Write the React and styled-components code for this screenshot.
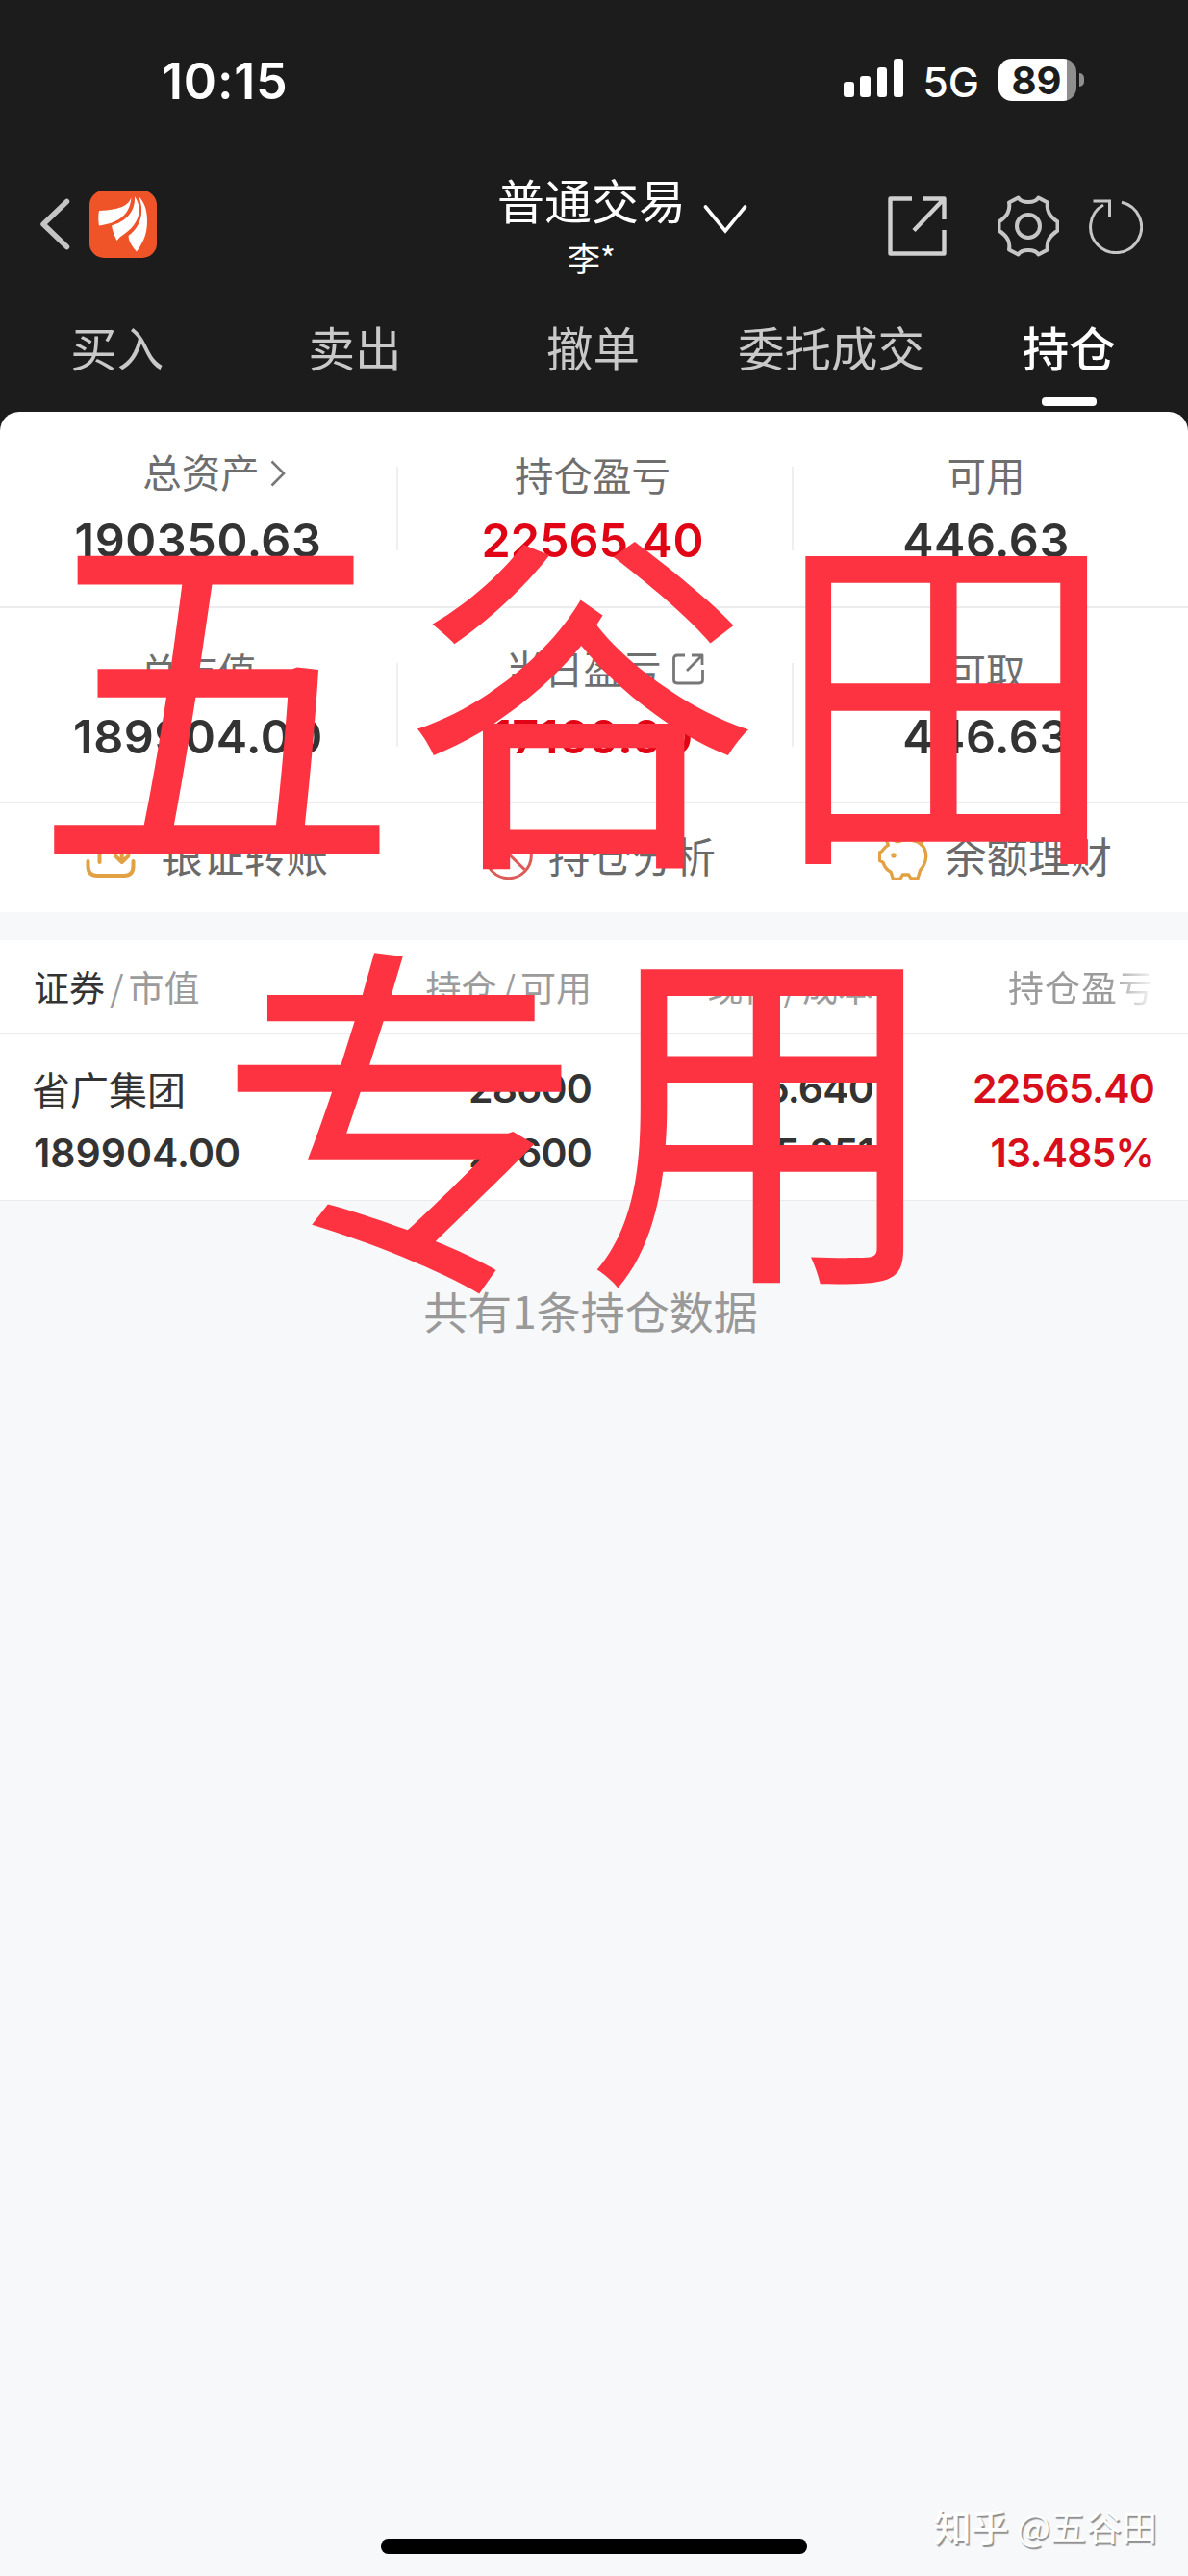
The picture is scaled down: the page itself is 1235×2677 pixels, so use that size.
import React from "react";
import styled, { createGlobalStyle } from "styled-components";

const tabs = ["买入", "卖出", "撤单", "委托成交", "持仓"];

const assets = [
  [
    { label: "总资产", value: "190350.63", icon: "more" },
    { label: "持仓盈亏", value: "22565.40", up: true },
    { label: "可用", value: "446.63" },
  ],
  [
    { label: "总市值", value: "189904.00" },
    { label: "当日盈亏", value: "17160.00", up: true, icon: "share" },
    { label: "可取", value: "446.63" },
  ],
];

const App = () => {
  return (
    <Screen>
      <GlobalStyle />
      <Header>
        <StatusBar>
          <Time>10:15</Time>
          <StatusRight>
            <Signal>
              <SignalBar $h={16} />
              <SignalBar $h={22} />
              <SignalBar $h={31} />
              <SignalBar $h={40} />
            </Signal>
            <Network>5G</Network>
            <Battery>
              <BatteryBody>89</BatteryBody>
              <BatteryTip />
            </Battery>
          </StatusRight>
        </StatusBar>
        <NavBar>
          <NavLeft>
            <BackIcon />
            <LogoIcon />
          </NavLeft>
          <NavTitle>
            <Title>普通交易</Title>
            <UserName>李*</UserName>
          </NavTitle>
          <NavRight>
            <CaretIcon />
            <NavIcons>
              <ShareIcon />
              <GearIcon />
              <RefreshIcon />
            </NavIcons>
          </NavRight>
        </NavBar>
        <Tabs>
          {tabs.map((tab) => (
            <Tab key={tab} $active={tab === "持仓"}>
              {tab}
            </Tab>
          ))}
        </Tabs>
      </Header>

      <PanelShell>
        <Panel>
          {assets.map((row, i) => (
            <AssetRow key={i}>
              {row.map((item, j) => (
                <React.Fragment key={item.label}>
                  {j > 0 && <Divider />}
                  <AssetCell $shift={j * 5}>
                    <AssetLabel $raised={!!item.icon}>
                      {item.label}
                      {item.icon === "more" && <MoreIcon />}
                      {item.icon === "share" && <SmallShareIcon />}
                    </AssetLabel>
                    <AssetValue $up={item.up}>{item.value}</AssetValue>
                  </AssetCell>
                </React.Fragment>
              ))}
            </AssetRow>
          ))}
          <Actions>
            <Action $gap={26}>
              <TransferIcon />
              银证转账
            </Action>
            <Action $gap={15}>
              <PieIcon />
              持仓分析
            </Action>
            <Action $gap={17}>
              <PiggyIcon />
              余额理财
            </Action>
          </Actions>
        </Panel>
      </PanelShell>

      <Holdings>
        <TableHead>
          <HeadCell $left>
            <Dark>证券</Dark>
            <Slash>/</Slash>市值
          </HeadCell>
          <HeadCell>
            持仓<Slash>/</Slash>可用
          </HeadCell>
          <HeadCell>
            现价<Slash>/</Slash>成本
          </HeadCell>
          <HeadCell $fade>持仓盈亏</HeadCell>
        </TableHead>
        <StockRow>
          <StockCell $left>
            <StockName>省广集团</StockName>
            <span>189904.00</span>
          </StockCell>
          <StockCell>
            <span>28600</span>
            <span>28600</span>
          </StockCell>
          <StockCell>
            <span>6.640</span>
            <span>5.851</span>
          </StockCell>
          <StockCell $up>
            <span>22565.40</span>
            <span>13.485%</span>
          </StockCell>
        </StockRow>
      </Holdings>
      <Total>共有1条持仓数据</Total>
      <HomeIndicator />

      <Stamp>
        <StampLine $x={35}>
          <StampChar $sx={1} $sy={1.06} $dy={-6}>五</StampChar>
          <StampChar $sx={0.975} $sy={0.99} $dy={-1}>谷</StampChar>
          <StampChar $sx={0.951} $sy={1} $dx={-2} $dy={-4}>田</StampChar>
        </StampLine>
        <StampLine $x={226} $y={54}>
          <StampChar $sx={1.015} $sy={1.01} $dx={2} $dy={3}>专</StampChar>
          <StampChar $sx={0.98} $sy={1.02} $dx={-1} $dy={-6}>用</StampChar>
        </StampLine>
      </Stamp>
      <Credit>
        <CreditSite>知乎</CreditSite> @五谷田
      </Credit>
    </Screen>
  );
};

export default App;

const BackIcon = () => (
  <svg width="31" height="54" viewBox="0 0 31 54" fill="none" stroke="#c4c4c4" strokeWidth="5.5" strokeLinecap="round" strokeLinejoin="round">
    <path d="M27.5 3.5L3 27L27.5 50.5" />
  </svg>
);

const LogoIcon = () => (
  <svg width="70" height="70" viewBox="0 0 70 70">
    <rect width="70" height="70" rx="15" fill="#ee5428" />
    <g fill="#fff">
      <path d="M43.5 7C41 15 33 20 10 21C9 26 9 31 10 36.5C28 34 42 27 43.5 7Z" />
      <path d="M47 6C48 22 38 32 23 36.5C24 42 26 47 28.5 52C33 46 40 44 46 36C54 25 53 15 47 6Z" />
      <path d="M51 6C58 22 53 38 40.5 47C41 53 44 58 49 63.5C54 56 60 48 60 32C60 20 57 12 51 6Z" />
    </g>
  </svg>
);

const CaretIcon = () => (
  <Caret width="46" height="32" viewBox="0 0 46 32" fill="none" stroke="#fff" strokeWidth="3.6" strokeLinecap="round">
    <path d="M2.5 3L23 28L43.5 3" />
  </Caret>
);

const ShareIcon = () => (
  <svg width="61" height="62" viewBox="0 0 61 62" fill="none" stroke="#cfcfcf" strokeWidth="4.4" strokeLinejoin="round">
    <path d="M25 2.5H2.5V59.5H58.5V35M36.5 2.5H58.5V24M58 3L27 35.5" />
  </svg>
);

const GearIcon = () => (
  <svg width="64" height="64" viewBox="-32 -32 64 64" fill="none" stroke="#c6c6c6" strokeWidth="4" strokeLinejoin="round">
    <path d="M-10.5 -29.5C-7 -23.5 7 -23.5 10.5 -29.5L20 -24.5C18.5 -16 22 -10.5 30.5 -4.5V4.5C22 10.5 18.5 16 20 24.5L10.5 29.5C7 23.5 -7 23.5 -10.5 29.5L-20 24.5C-18.5 16 -22 10.5 -30.5 4.5V-4.5C-22 -10.5 -18.5 -16 -20 -24.5Z" />
    <circle r="12" />
  </svg>
);

const RefreshIcon = () => (
  <svg width="56" height="58" viewBox="-28 -30 56 58" fill="none" stroke="#c6c6c6" strokeWidth="3">
    <path d="M6 -25.8A26.5 26.5 0 1 1 -13 -23M-23.5 -27H-6.5V-10" />
  </svg>
);

const MoreIcon = () => (
  <More width="16" height="28" viewBox="0 0 16 28" fill="none" stroke="#777" strokeWidth="2.6">
    <path d="M1.5 1.5L14 14L1.5 26.5" />
  </More>
);

const SmallShareIcon = () => (
  <SmallShare width="33" height="33" viewBox="0 0 33 33" fill="none" stroke="#777" strokeWidth="2.8" strokeLinejoin="round">
    <path d="M13 2H5Q1.5 2 1.5 5.5V27.5Q1.5 31 5 31H28Q31.5 31 31.5 27.5V17M20 2H31V12M31 2L15 18" />
  </SmallShare>
);

const TransferIcon = () => (
  <svg width="52" height="52" viewBox="0 0 52 52" fill="none" stroke="#e2a243" strokeWidth="4" strokeLinecap="round" strokeLinejoin="round">
    <path d="M2.5 32V37Q2.5 47 12 47H40Q49.5 47 49.5 37V32" />
    <path d="M14.5 33V6M7.8 13L14.5 6M37.7 5V32M31 26.5L37.7 33L44.5 26.5" />
  </svg>
);

const PieIcon = () => (
  <svg width="52" height="52" viewBox="69 15 156 156" fill="none" stroke="#dd5b57" strokeWidth="9">
    <circle cx="146" cy="93" r="71" />
    <path d="M195 44L148 90L196 137" />
  </svg>
);

const PiggyIcon = () => (
  <svg width="52" height="52" viewBox="39 30 156 156" fill="none" stroke="#e2a243" strokeWidth="10" strokeLinecap="round" strokeLinejoin="round">
    <path d="M64 59Q84 56 98 66Q118 58 140 60C175 64 189 88 188 112C187 132 178 145 170 154L162 180H141L134 168H115L108 181H85L78 159Q62 152 54 130L43 124V99Q52 96 56 88Q62 80 70 76Z" />
    <path d="M119 56C124 34 176 30 177 58Q177 68 172 74" />
    <circle cx="87" cy="108" r="3" fill="#e2a243" />
  </svg>
);

const GlobalStyle = createGlobalStyle`
  body {
    margin: 0;
    background: #f7f8fa;
  }
  * {
    box-sizing: border-box;
  }
  svg {
    display: block;
    flex: none;
  }
`;

const Screen = styled.div`
  position: relative;
  width: 1235px;
  height: 2677px;
  display: flex;
  flex-direction: column;
  overflow: hidden;
  background: #f7f8fa;
  font-family: "Noto Sans CJK SC", sans-serif;
`;

const Header = styled.header`
  height: 428px;
  background: #1c1c1c;
  color: #fff;
`;

const StatusBar = styled.div`
  height: 168px;
  padding: 0 108px 0 168px;
  display: flex;
  align-items: center;
  justify-content: space-between;
  font-family: Inter, sans-serif;
`;

const Time = styled.div`
  font-size: 52px;
  font-weight: 580;
  letter-spacing: 0.8px;
`;

const StatusRight = styled.div`
  display: flex;
  align-items: center;
`;

const Signal = styled.div`
  display: flex;
  align-items: flex-end;
  gap: 6.4px;
  height: 40px;
  margin-top: -6px;
`;

const SignalBar = styled.div`
  width: 10.7px;
  height: ${({ $h }) => $h}px;
  border-radius: 3px;
  background: #fff;
`;

const Network = styled.div`
  margin: 2px 20px 0 20px;
  font-size: 43px;
  font-weight: 500;
`;

const Battery = styled.div`
  display: flex;
  align-items: center;
  gap: 3px;
  margin-top: -2px;
`;

const BatteryBody = styled.div`
  width: 81px;
  height: 44px;
  padding-right: 2px;
  display: flex;
  align-items: center;
  justify-content: center;
  border-radius: 14px;
  background: linear-gradient(to right, #fff 71px, #8e8e8e 71px);
  color: #1c1c1c;
  font-size: 40px;
  font-weight: 680;
`;

const BatteryTip = styled.div`
  width: 5px;
  height: 14px;
  border-radius: 0 5px 5px 0;
  background: #8e8e8e;
`;

const NavBar = styled.div`
  height: 136px;
  padding: 0 47px 0 42px;
  display: grid;
  grid-template-columns: 475px 196px 1fr;
  align-items: center;
`;

const NavLeft = styled.div`
  display: flex;
  align-items: center;
  gap: 20px;
  padding-bottom: 6px;
`;

const NavTitle = styled.div`
  display: flex;
  flex-direction: column;
  align-items: center;
  padding-bottom: 5px;
`;

const Title = styled.div`
  font-size: 49px;
  line-height: 60px;
  white-space: nowrap;
`;

const UserName = styled.div`
  margin-top: 9px;
  font-size: 34px;
  line-height: 44px;
`;

const NavRight = styled.div`
  display: flex;
  align-items: center;
  justify-content: space-between;
  padding: 0 0 2px 18px;
`;

const Caret = styled.svg`
  margin-bottom: 14px;
`;

const NavIcons = styled.div`
  display: flex;
  align-items: center;
  gap: 53px;

  svg:last-child {
    margin-left: -22px;
  }
`;

const Tabs = styled.nav`
  display: grid;
  grid-template-columns: repeat(5, 1fr);
  padding-top: 20px;
  margin-left: -2px;
`;

const Tab = styled.div`
  display: flex;
  flex-direction: column;
  align-items: center;
  font-size: 48.5px;
  line-height: 72px;
  font-weight: ${({ $active }) => ($active ? 500 : 400)};
  color: ${({ $active }) => ($active ? "#fff" : "#c9c9c9")};

  &::after {
    content: "";
    width: 57px;
    height: 9px;
    margin-top: 17px;
    border-radius: 4px;
    background: ${({ $active }) => ($active ? "#fff" : "transparent")};
  }
`;

const PanelShell = styled.div`
  background: #1c1c1c;
`;

const Panel = styled.section`
  height: 520px;
  border-radius: 20px 20px 0 0;
  background: #fff;
`;

const AssetRow = styled.div`
  display: grid;
  grid-template-columns: 412px 2px 409px 2px 1fr;
  height: 204px;
  border-bottom: 2px solid #ececee;

  & + & {
    height: 202px;
    border-bottom-width: 1px;
  }
`;

const Divider = styled.div`
  height: 87px;
  margin-top: 57px;
  background: #efefef;
`;

const AssetCell = styled.div`
  padding: 35px ${({ $shift }) => $shift}px 0 0;
  display: flex;
  flex-direction: column;
  align-items: center;
`;

const AssetLabel = styled.div`
  display: flex;
  align-items: center;
  margin-top: ${({ $raised }) => ($raised ? -3 : 0)}px;
  margin-bottom: ${({ $raised }) => ($raised ? 14 : 11)}px;
  color: #6e6e6e;
  font-size: 40.5px;
  line-height: 60px;
`;

const More = styled.svg`
  margin: 4px -33px 0 11px;
`;

const SmallShare = styled.svg`
  margin: 2px -25px 0 11px;
`;

const AssetValue = styled.div`
  color: ${({ $up }) => ($up ? "#e00414" : "#333")};
  font-family: Inter, sans-serif;
  font-size: 48.5px;
  font-weight: 570;
  line-height: 56px;
  letter-spacing: ${({ $up }) => ($up ? 0 : 0.6)}px;
`;

const Actions = styled.div`
  height: 110px;
  padding-left: 89px;
  display: grid;
  grid-template-columns: 414px 410px 1fr;
  align-items: center;
`;

const Action = styled.div`
  display: flex;
  align-items: center;
  gap: ${({ $gap }) => $gap}px;
  color: #6a6a6a;
  font-size: 43.5px;
  line-height: 60px;
`;

const Holdings = styled.section`
  margin-top: 29px;
  background: #fff;
  border-bottom: 1px solid #ebebed;
`;

const TableHead = styled.div`
  height: 98px;
  padding: 0 35px 1px;
  display: grid;
  grid-template-columns: 290px 290px 293px 292px;
  align-items: center;
  border-bottom: 1px solid #ececee;
`;

const HeadCell = styled.div`
  color: #9b9b9b;
  font-size: 37px;
  line-height: 52px;
  text-align: ${({ $left }) => ($left ? "left" : "right")};
  letter-spacing: ${({ $fade }) => ($fade ? 1 : 0)}px;
  ${({ $fade }) =>
    $fade && "mask-image: linear-gradient(to right, #000 84%, transparent 101%);"}
`;

const Dark = styled.span`
  color: #333;
`;

const Slash = styled.span`
  margin: 0 5px;
`;

const StockRow = styled.div`
  height: 172px;
  padding: 30px 35px 0;
  display: grid;
  grid-template-columns: 290px 290px 293px 292px;
`;

const StockCell = styled.div`
  display: flex;
  flex-direction: column;
  align-items: ${({ $left }) => ($left ? "flex-start" : "flex-end")};
  gap: 15px;
  color: ${({ $up }) => ($up ? "#d80e1a" : "#333")};
  font-family: Inter, sans-serif;
  font-size: 41px;
  font-weight: 580;
  line-height: 52px;
  letter-spacing: ${({ $left }) => ($left ? 0 : -0.8)}px;
`;

const StockName = styled.span`
  margin-left: -2px;
  font-family: "Noto Sans CJK SC", sans-serif;
  font-size: 40px;
  font-weight: 400;
`;

const Total = styled.div`
  margin-top: 83px;
  padding-right: 7px;
  text-align: center;
  color: #999;
  font-size: 46px;
  line-height: 60px;
`;

const HomeIndicator = styled.div`
  width: 443px;
  height: 15px;
  margin: auto auto 23px;
  border-radius: 8px;
  background: #000;
`;

/* red owner stamp, lies over the whole page */
const Stamp = styled.div`
  position: absolute;
  top: 519px;
  left: 0;
  color: #fd3341;
  font-size: 380px;
  line-height: 380px;
`;

const StampLine = styled.div`
  display: flex;
  margin-top: ${({ $y }) => $y || 0}px;
  margin-left: ${({ $x }) => $x}px;
`;

const StampChar = styled.span`
  width: 380px;
  transform: translate(${({ $dx }) => $dx || 0}px, ${({ $dy }) => $dy || 0}px)
    scale(${({ $sx }) => $sx}, ${({ $sy }) => $sy});
  transform-origin: 50% 59%;
`;

const Credit = styled.div`
  position: absolute;
  right: 32px;
  bottom: 26px;
  color: #fff;
  font-size: 37px;
  line-height: 52px;
  text-shadow: 1.5px 1.5px 1px #8f8f8f;
`;

const CreditSite = styled.span`
  font-size: 39px;
  font-weight: 500;
`;
